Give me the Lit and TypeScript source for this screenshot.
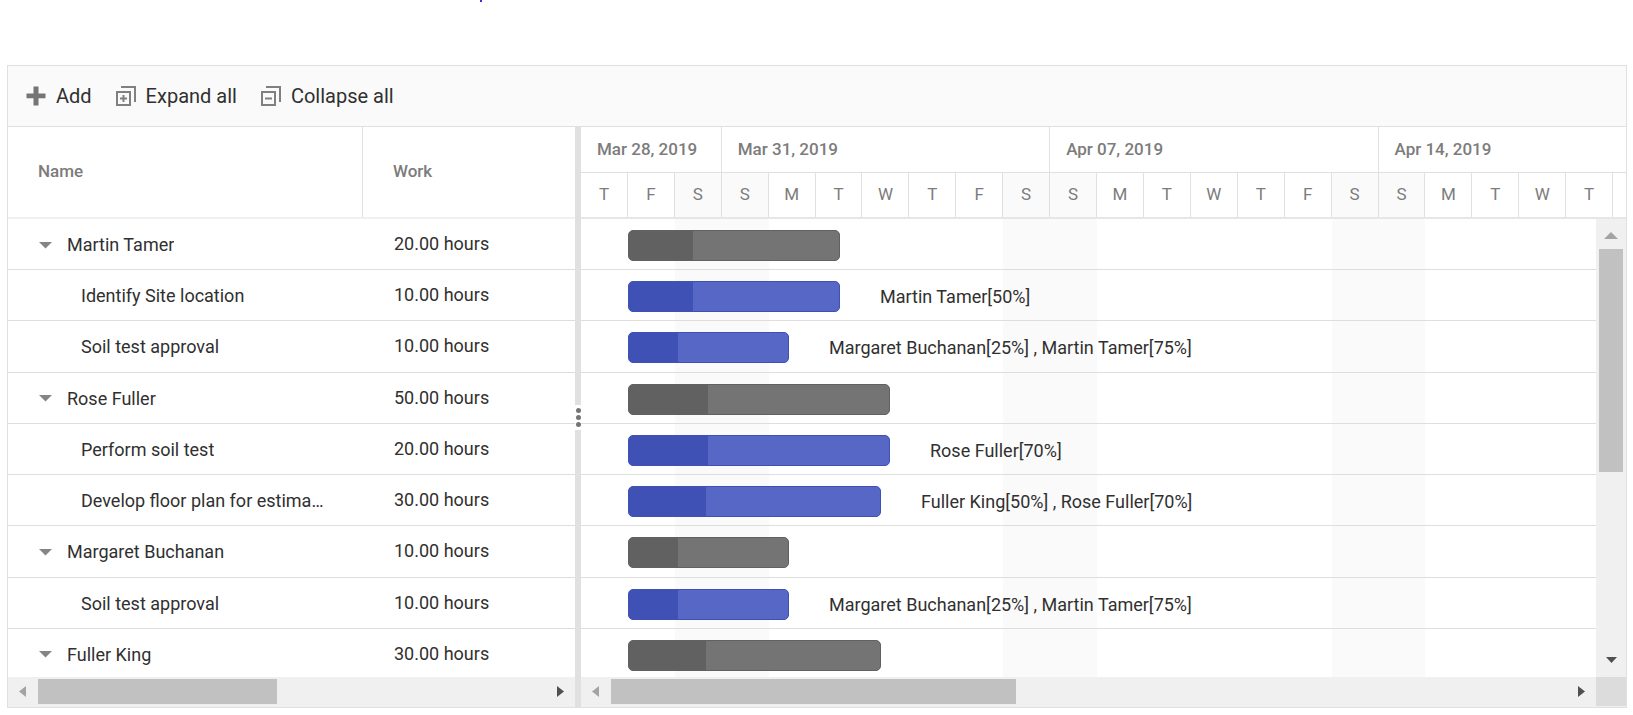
import { LitElement, html, css, svg, nothing } from "lit";
import { customElement } from "lit/decorators.js";
import { classMap } from "lit/directives/class-map.js";
import { styleMap } from "lit/directives/style-map.js";

interface Row {
  name: string;
  work: string;
  parent?: boolean;
  width: number;
  progress: number;
  resources?: string;
}

const ROWS: Row[] = [
  { name: "Martin Tamer", work: "20.00 hours", parent: true, width: 212, progress: 64 },
  { name: "Identify Site location", work: "10.00 hours", width: 212, progress: 64, resources: "Martin Tamer[50%]" },
  { name: "Soil test approval", work: "10.00 hours", width: 161, progress: 49, resources: "Margaret Buchanan[25%] , Martin Tamer[75%]" },
  { name: "Rose Fuller", work: "50.00 hours", parent: true, width: 262, progress: 79 },
  { name: "Perform soil test", work: "20.00 hours", width: 262, progress: 79, resources: "Rose Fuller[70%]" },
  { name: "Develop floor plan for estimation", work: "30.00 hours", width: 253, progress: 77, resources: "Fuller King[50%] , Rose Fuller[70%]" },
  { name: "Margaret Buchanan", work: "10.00 hours", parent: true, width: 161, progress: 49 },
  { name: "Soil test approval", work: "10.00 hours", width: 161, progress: 49, resources: "Margaret Buchanan[25%] , Martin Tamer[75%]" },
  { name: "Fuller King", work: "30.00 hours", parent: true, width: 253, progress: 77 },
];

const WEEKS = [
  { label: "Mar 28, 2019", days: 3 },
  { label: "Mar 31, 2019", days: 7 },
  { label: "Apr 07, 2019", days: 7 },
  { label: "Apr 14, 2019", days: 6 },
];

const LETTERS = ["S", "M", "T", "W", "T", "F", "S"];
/* The timeline opens on a Thursday; the last column closes it without a letter. */
const DAY_COUNT = 23;
const DAYS = Array.from({ length: DAY_COUNT }, (_, i) => (i + 4) % 7);

const plusIcon = html`<svg class="icon" viewBox="0 0 20 20" aria-hidden="true">
  <path d="M7.500 0.500h5v7H19.500v4.800h-7V19.500h-5v-7.200H0.500V7.500h7z" fill="#757575" />
</svg>`;

const boxIcon = (expand: boolean) => html`<svg class="icon" viewBox="0 0 20 20" aria-hidden="true">
  <g fill="none" stroke="#808080" stroke-width="2">
    <path d="M5 1h14V16" />
    <rect x="1" y="6" width="13" height="13" />
    <path d="M4 12.500h7" />
    ${expand ? svg`<path d="M7.500 9v7" />` : nothing}
  </g>
</svg>`;

const arrow = (d: string) => html`<svg class="arrow" viewBox="0 0 30 30" aria-hidden="true"><path d=${d} /></svg>`;

@customElement("app-root")
export class AppRoot extends LitElement {
  static styles = css`
    :host {
      display: block;
      background: #fff;
      color: #303030;
      font-family: Roboto, "Liberation Sans", sans-serif;
      font-size: 18px;
      line-height: 24px;
    }
    * {
      box-sizing: border-box;
    }
    .top {
      height: 65px;
      padding-left: 480px;
    }
    .dot {
      width: 2px;
      height: 2px;
      background: #3a2ee8;
    }
    .gantt {
      margin: 0 6px 0 7px;
      border: 1px solid #e0e0e0;
    }
    .toolbar {
      display: flex;
      gap: 24px;
      height: 61px;
      padding: 0 18px;
      background: #fafafa;
      border-bottom: 1px solid #e0e0e0;
    }
    button {
      font: inherit;
      color: inherit;
      border: 0;
      padding: 0;
      margin: 0;
      background: none;
    }
    .tool {
      display: flex;
      align-items: center;
      gap: 10px;
      font-size: 20px;
    }
    .icon {
      width: 20px;
      height: 20px;
      display: block;
    }
    .panes {
      display: flex;
    }
    .left {
      flex: 0 0 567px;
      min-width: 0;
    }
    .right {
      flex: 1;
      min-width: 0;
    }
    .splitter {
      flex: 0 0 6px;
      display: flex;
      align-items: center;
      background: #e0e0e0;
    }
    .handle {
      width: 6px;
      height: 25px;
      display: flex;
      flex-direction: column;
      align-items: center;
      justify-content: center;
      gap: 2px;
      background: #fff;
    }
    .handle i {
      width: 5px;
      height: 5px;
      border-radius: 50%;
      background: #757575;
    }
    .grid-view {
      height: 550px;
      overflow: hidden;
    }
    table,
    thead,
    th,
    td {
      display: block;
    }
    tr {
      display: grid;
      grid-template-columns: 355px 1fr;
    }
    th {
      height: 90px;
      padding: 0 30px;
      text-align: left;
      font-size: 17px;
      font-weight: 500;
      line-height: 88px;
      color: #7c7c7c;
    }
    th:first-child {
      border-right: 1px solid #e0e0e0;
    }
    thead {
      border-bottom: 2px solid #f0f0f0;
    }
    tbody {
      display: grid;
      grid-auto-rows: 1fr;
      height: 461px;
    }
    tbody tr {
      border-bottom: 1px solid #dedede;
    }
    td {
      padding: 13px 34px 0 31px;
      min-width: 0;
    }
    .name {
      display: flex;
      align-items: center;
      height: 26px;
    }
    .label {
      overflow: hidden;
      text-overflow: ellipsis;
      white-space: nowrap;
    }
    .child {
      padding-left: 42px;
    }
    .toggle {
      display: block;
      width: 28px;
      flex: none;
    }
    .toggle svg {
      display: block;
      width: 13px;
      height: 7px;
    }
    .timeline {
      overflow: hidden;
      color: #7c7c7c;
      font-size: 17px;
      border-bottom: 2px solid #e6e6e6;
    }
    .scale {
      display: grid;
      grid-template-columns: repeat(23, 1fr);
      width: 1079px;
    }
    .week {
      height: 46px;
      padding: 0 16px;
      line-height: 44px;
      font-weight: 500;
      border-right: 1px solid #e0e0e0;
      border-bottom: 1px solid #e0e0e0;
    }
    .day {
      height: 44px;
      line-height: 43px;
      text-align: center;
      border-right: 1px solid #e0e0e0;
    }
    .weekend {
      background: #fafafa;
    }
    .body {
      display: flex;
      height: 458px;
    }
    .chart {
      flex: 1;
      min-width: 0;
      display: grid;
      grid-template-columns: minmax(0, 1fr);
      grid-template-rows: 461px;
      overflow: hidden;
    }
    .backdrop,
    .tasks {
      grid-area: 1 / 1;
    }
    .tasks {
      display: grid;
      grid-auto-rows: 1fr;
    }
    .task {
      display: flex;
      gap: 40px;
      padding: 11px 0 0 47px;
      border-bottom: 1px solid #dedede;
      white-space: nowrap;
      line-height: 31px;
    }
    .bar {
      flex: none;
      height: 31px;
      border: 1px solid #3f51b5;
      border-radius: 5px;
      overflow: hidden;
      background: #5767c6;
    }
    .done {
      height: 100%;
      background: #3f51b5;
    }
    .bar.parent {
      border-color: #616161;
      background: #747474;
    }
    .bar.parent .done {
      background: #616161;
    }
    .hscroll,
    .vscroll {
      display: flex;
      background: #f0f0f0;
    }
    .hscroll {
      height: 30px;
    }
    .vscroll {
      flex: 0 0 30px;
      flex-direction: column;
    }
    .arrow {
      display: block;
      width: 30px;
      height: 30px;
      fill: #505050;
    }
    .off .arrow {
      fill: #a3a3a3;
    }
    .track {
      flex: 1;
      display: flex;
    }
    .hscroll .track {
      padding: 2px 0 3px;
    }
    .vscroll .track {
      padding: 0 3px;
    }
    .thumb {
      background: #c1c1c1;
    }
    .hscroll .left-thumb {
      width: 239px;
    }
    .hscroll .right-thumb {
      width: 405px;
    }
    .vscroll .thumb {
      width: 100%;
      height: 223px;
    }
    .corner {
      width: 30px;
      height: 29px;
      background: #dcdcdc;
    }
  `;

  private renderRow(row: Row) {
    return html`<tr>
      <td>
        <div class=${classMap({ name: true, child: !row.parent })}>
          ${row.parent
            ? html`<button class="toggle" aria-label=${"Collapse " + row.name}>
                <svg viewBox="0 0 13 7" aria-hidden="true"><path d="M0 0h13L6.500 6.500z" fill="#858585" /></svg>
              </button>`
            : nothing}
          <span class="label">${row.name}</span>
        </div>
      </td>
      <td>${row.work}</td>
    </tr>`;
  }

  private renderTask(row: Row) {
    return html`<div class="task">
      <div class=${classMap({ bar: true, parent: !!row.parent })} style=${styleMap({ width: `${row.width}px` })}>
        <div class="done" style=${styleMap({ width: `${row.progress}px` })}></div>
      </div>
      ${row.resources ? html`<span>${row.resources}</span>` : nothing}
    </div>`;
  }

  private renderHScroll(thumb: string, corner: boolean) {
    return html`<div class="hscroll">
      <button class="off" aria-label="Scroll left">${arrow("M18 9v11L11 14.500z")}</button>
      <div class="track"><div class="thumb ${thumb}"></div></div>
      <button aria-label="Scroll right">${arrow("M12 9v11L19 14.500z")}</button>
      ${corner ? html`<div class="corner"></div>` : nothing}
    </div>`;
  }

  render() {
    return html`
      <div class="top"><div class="dot"></div></div>
      <main class="gantt">
        <div class="toolbar" role="toolbar">
          <button class="tool">${plusIcon}Add</button>
          <button class="tool">${boxIcon(true)}Expand all</button>
          <button class="tool">${boxIcon(false)}Collapse all</button>
        </div>
        <div class="panes">
          <section class="left">
            <div class="grid-view">
              <table>
                <thead>
                  <tr><th scope="col">Name</th><th scope="col">Work</th></tr>
                </thead>
                <tbody>${ROWS.map((r) => this.renderRow(r))}</tbody>
              </table>
            </div>
            ${this.renderHScroll("left-thumb", false)}
          </section>
          <div class="splitter" role="separator"><div class="handle"><i></i><i></i><i></i></div></div>
          <section class="right">
            <div class="timeline">
              <div class="scale">
                ${WEEKS.map((w) => html`<div class="week" style=${styleMap({ gridColumn: `span ${w.days}` })}>${w.label}</div>`)}
                ${DAYS.map(
                  (d, i) => html`<div class=${classMap({ day: true, weekend: d % 6 === 0 })}>${i < DAY_COUNT - 1 ? LETTERS[d] : nothing}</div>`
                )}
              </div>
            </div>
            <div class="body">
              <div class="chart">
                <div class="backdrop scale">
                  ${DAYS.map((d) => html`<div class=${classMap({ weekend: d % 6 === 0 })}></div>`)}
                </div>
                <div class="tasks">${ROWS.map((r) => this.renderTask(r))}</div>
              </div>
              <div class="vscroll">
                <button class="off" aria-label="Scroll up">${arrow("M8 20h14L15 13z")}</button>
                <div class="track"><div class="thumb"></div></div>
                <button aria-label="Scroll down">${arrow("M10 10h11L15.500 16z")}</button>
              </div>
            </div>
            ${this.renderHScroll("right-thumb", true)}
          </section>
        </div>
      </main>
    `;
  }
}
